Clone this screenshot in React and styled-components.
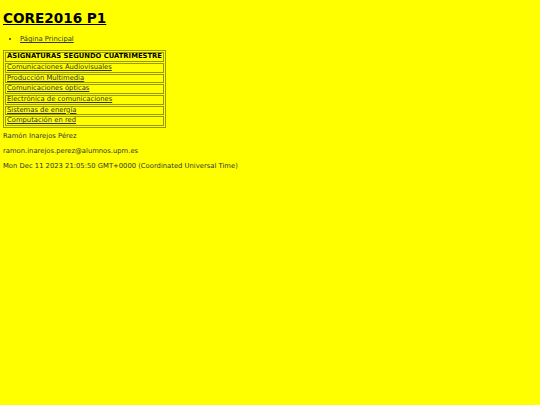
import React from 'react';
import styled, { createGlobalStyle } from 'styled-components';

const GlobalStyle = createGlobalStyle`
  html, body {
    margin: 0;
    background: #ffff00;
  }
  body {
    padding: 3px;
    font-family: 'DejaVu Sans', Verdana, sans-serif;
    font-size: 6.8px;
    color: #333;
  }
`;

const Title = styled.h1`
  margin: 7px 0 9px;
  font-size: 13.6px;
  font-weight: bold;
  color: #000;
  text-decoration: underline;
  line-height: 1.2;
`;

const Menu = styled.ul`
  margin: 0 0 7px;
  padding-left: 17px;
  line-height: 1.2;

  a {
    color: #333;
  }
`;

const Table = styled.table`
  border: 1px solid rgba(0, 0, 0, 0.4);
  border-spacing: 1px;
  margin-bottom: 4px;
`;

const Cell = styled.td`
  border: 1px solid rgba(0, 0, 0, 0.4);
  padding: 0 1px;
  line-height: 1.12;
  font-weight: ${p => (p.head ? 'bold' : 'normal')};
  color: ${p => (p.head ? '#000' : '#333')};

  a {
    color: #333;
  }
`;

const Line = styled.p`
  margin: 0 0 6.8px;
  line-height: 1.2;
`;

const subjects = [
  'Comunicaciones Audiovisuales',
  'Producción Multimedia',
  'Comunicaciones ópticas',
  'Electrónica de comunicaciones',
  'Sistemas de energía',
  'Computación en red',
];

export default function App() {
  return (
    <>
      <GlobalStyle />
      <Title>CORE2016 P1</Title>
      <Menu>
        <li><a href="#">Página Principal</a></li>
      </Menu>
      <Table>
        <tbody>
          <tr><Cell head>ASIGNATURAS SEGUNDO CUATRIMESTRE</Cell></tr>
          {subjects.map(s => (
            <tr key={s}><Cell><a href="#">{s}</a></Cell></tr>
          ))}
        </tbody>
      </Table>
      <Line>Ramón Inarejos Pérez</Line>
      <Line>ramon.inarejos.perez@alumnos.upm.es</Line>
      <Line>Mon Dec 11 2023 21:05:50 GMT+0000 (Coordinated Universal Time)</Line>
    </>
  );
}
